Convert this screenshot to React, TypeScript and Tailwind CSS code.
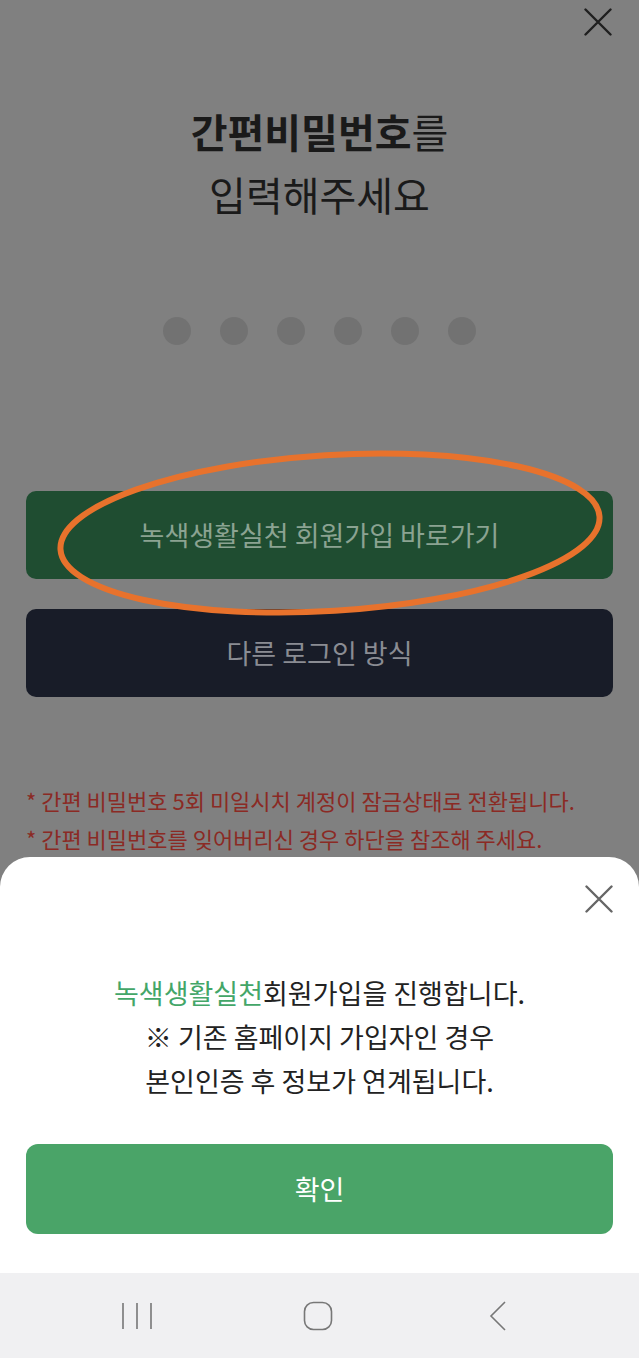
const font = "font-['Noto_Sans_CJK_KR','Noto_Sans',sans-serif]";

function CloseIcon({ size, color, width }: { size: number; color: string; width: number }) {
  return (
    <svg width={size} height={size} viewBox="0 0 28 28" fill="none" stroke={color} strokeWidth={width} strokeLinecap="round">
      <path d="M1.5 1.5l25 25M26.5 1.5l-25 25" />
    </svg>
  );
}

function PinDots() {
  return (
    <div className="mt-[91px] flex justify-center gap-[29px]">
      {[0, 1, 2, 3, 4, 5].map((i) => (
        <span key={i} className="h-[28px] w-[28px] rounded-full bg-[#727272]" />
      ))}
    </div>
  );
}

// hand-drawn orange highlight around the signup button
function Annotation() {
  return (
    <svg
      className="pointer-events-none absolute left-0 top-[440px]"
      width="639"
      height="190"
      viewBox="0 0 639 190"
      fill="none"
    >
      <g transform="rotate(-3.5 330 93)">
        <ellipse cx="330" cy="93" rx="270" ry="78" stroke="#e8722c" strokeWidth="6" />
      </g>
    </svg>
  );
}

function NavBar() {
  return (
    <div className="flex h-[85px] shrink-0 items-center justify-center gap-[151px] bg-[#f0f0f2] pr-[4px]">
      <svg width="30" height="30" viewBox="0 0 30 30" fill="none" stroke="#777" strokeWidth="1.6">
        <path d="M1 2v26M15 2v26M29 2v26" />
      </svg>
      <svg width="30" height="30" viewBox="0 0 30 30" fill="none" stroke="#777" strokeWidth="1.6">
        <rect x="1.5" y="1.5" width="27" height="27" rx="9" />
      </svg>
      <svg width="30" height="30" viewBox="0 0 30 30" fill="none" stroke="#777" strokeWidth="1.6">
        <path d="M21 1L7 15l14 14" />
      </svg>
    </div>
  );
}

export default function App() {
  return (
    <div className={`relative flex h-[1358px] w-full flex-col overflow-hidden bg-[#808080] ${font}`}>
      <div className="relative flex-1 px-[26px]">
        <div className="flex justify-end pr-[1px] pt-[8px]">
          <CloseIcon size={28} color="#1f1f1f" width={2.4} />
        </div>

        <h1 className="mt-[64px] text-center text-[40px] font-normal leading-[63px] text-[#1a1a1a]">
          <span className="font-bold">간편비밀번호</span>를
          <br />
          입력해주세요
        </h1>

        <PinDots />

        <button className="mt-[146px] flex h-[88px] w-full items-center justify-center rounded-[10px] bg-[#1f4d31] text-[27px] text-[#8ba392]">
          녹색생활실천 회원가입 바로가기
        </button>
        <button className="mt-[30px] flex h-[88px] w-full items-center justify-center rounded-[10px] bg-[#181c28] text-[27px] text-[#8a8c93]">
          다른 로그인 방식
        </button>

        <ul className="mt-[84px] text-[22px] leading-[38px] text-[#8b2a24]">
          <li>* 간편 비밀번호 5회 미일시치 계정이 잠금상태로 전환됩니다.</li>
          <li>* 간편 비밀번호를 잊어버리신 경우 하단을 참조해 주세요.</li>
        </ul>

        <Annotation />
      </div>

      <div className="flex h-[416px] shrink-0 flex-col rounded-t-[30px] bg-white px-[26px]">
        <div className="flex justify-end pt-[28px]">
          <CloseIcon size={28} color="#666" width={2.4} />
        </div>
        <p className="mt-[58px] text-center text-[27px] leading-[44px] text-[#222]">
          <span className="text-[#43a668]">녹색생활실천</span>회원가입을 진행합니다.
          <br />※ 기존 홈페이지 가입자인 경우
          <br />
          본인인증 후 정보가 연계됩니다.
        </p>
        <button className="mt-[41px] flex h-[90px] w-full items-center justify-center rounded-[12px] bg-[#4aa468] text-[27px] text-white">
          확인
        </button>
      </div>

      <NavBar />
    </div>
  );
}
